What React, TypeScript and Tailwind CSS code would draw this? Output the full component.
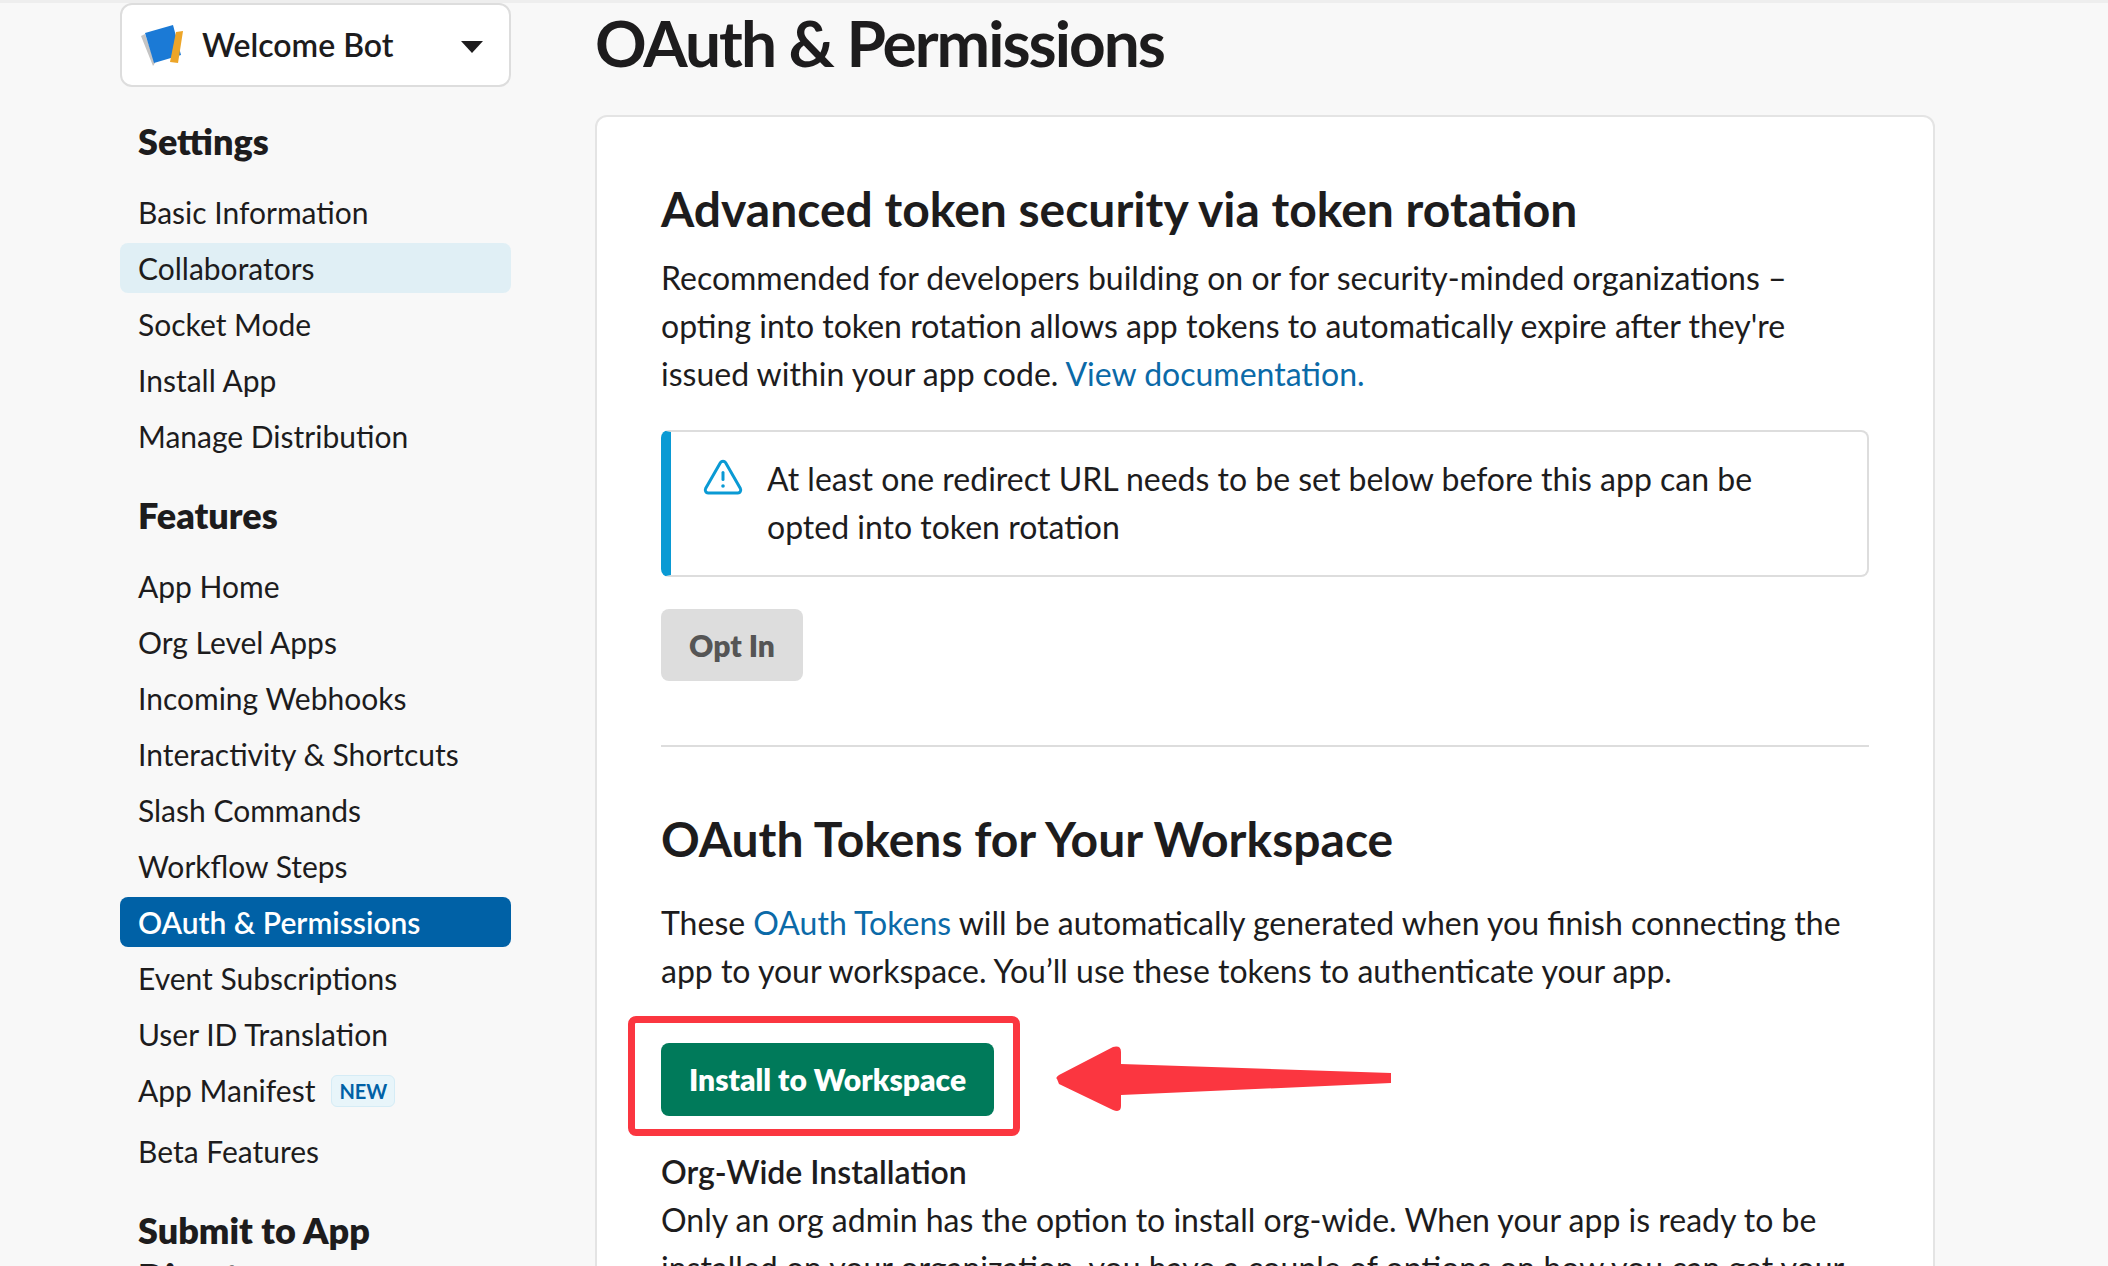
const settings = ["Basic Information", "Collaborators", "Socket Mode", "Install App", "Manage Distribution"];
const features = [
  "App Home",
  "Org Level Apps",
  "Incoming Webhooks",
  "Interactivity & Shortcuts",
  "Slash Commands",
  "Workflow Steps",
  "OAuth & Permissions",
  "Event Subscriptions",
  "User ID Translation",
];

function NavItem({ label, state }: { label: string; state?: "hover" | "active" }) {
  const tone =
    state === "active"
      ? "bg-[#0061a6] text-white font-semibold"
      : state === "hover"
        ? "bg-[#e0eff5] text-[#1d1c1d]"
        : "text-[#1d1c1d]";
  return <div className={`flex h-[50px] items-center rounded-lg px-[18px] text-[30px] ${tone}`}>{label}</div>;
}

function BookIcon() {
  return (
    <svg width="44" height="42" viewBox="0 0 44 42" className="shrink-0">
      <path d="M1 12 L5 10 L15 39 L13 42 Z" fill="#c4c4c4" />
      <path d="M5 9 L33 1 L41 31 L14 39 Z" fill="#1b7ad6" />
      <path d="M36 8 L43 7 L38 39 L30 38 Z" fill="#eda528" />
    </svg>
  );
}

function WarningIcon() {
  return (
    <svg width="40" height="36" viewBox="0 0 40 36" fill="none" className="mt-[4px] shrink-0">
      <path
        d="M17.5 3.5 a3 3 0 0 1 5 0 L37.4 29.6 a3 3 0 0 1 -2.5 4.4 H5.1 a3 3 0 0 1 -2.5 -4.4 Z"
        stroke="#0a9ad4"
        strokeWidth="3"
        strokeLinejoin="round"
      />
      <rect x="18.5" y="12" width="3" height="10" rx="1.5" fill="#0a9ad4" />
      <circle cx="20" cy="27" r="1.8" fill="#0a9ad4" />
    </svg>
  );
}

export default function App() {
  return (
    <div className="h-[1266px] w-[2108px] overflow-hidden bg-[#f8f8f8] font-['Lato',sans-serif] text-[#1d1c1d]">
      <div className="h-[3px] bg-[#eeeeee]" />
      <div className="flex pl-[120px]">
        {/* Sidebar */}
        <aside className="w-[391px] shrink-0">
          <div className="flex h-[84px] items-center rounded-xl border-2 border-[#dddddd] bg-white pl-[18px] pr-[26px]">
            <BookIcon />
            <span className="ml-[18px] flex-1 text-[32px] font-semibold">Welcome Bot</span>
            <span className="mt-[3px] h-0 w-0 border-x-[11px] border-t-[12px] border-x-transparent border-t-[#1d1c1d]" />
          </div>
          <h3 className="mt-[31px] px-[18px] text-[36px] font-extrabold leading-[46px]">Settings</h3>
          <nav className="mt-[23px] flex flex-col gap-[6px]">
            {settings.map((s) => (
              <NavItem key={s} label={s} state={s === "Collaborators" ? "hover" : undefined} />
            ))}
          </nav>
          <h3 className="mt-[31px] px-[18px] text-[36px] font-extrabold leading-[46px]">Features</h3>
          <nav className="mt-[23px] flex flex-col gap-[6px]">
            {features.map((s) => (
              <NavItem key={s} label={s} state={s === "OAuth & Permissions" ? "active" : undefined} />
            ))}
            <div className="flex h-[50px] items-center px-[18px] text-[30px]">
              App Manifest
              <span className="ml-[16px] mt-[2px] rounded-md border border-[#d5ecf6] bg-[#e8f5fa] px-[7px] text-[20px] font-bold leading-[30px] text-[#0061a6]">
                NEW
              </span>
            </div>
            <div className="mt-[5px]">
              <NavItem label="Beta Features" />
            </div>
          </nav>
          <h3 className="mt-[31px] px-[18px] text-[36px] font-extrabold leading-[46px]">Submit to App Directory</h3>
        </aside>

        {/* Main */}
        <main className="ml-[84px] w-[1340px] shrink-0">
          <h1 className="mt-[-8px] h-[120px] text-[64px] font-bold leading-[96px] tracking-[-2px]">OAuth &amp; Permissions</h1>
          <section className="relative rounded-xl border-2 border-[#e4e4e4] bg-white px-[64px] pt-[62px]">
            <h2 className="text-[48px] font-bold leading-[60px]">Advanced token security via token rotation</h2>
            <p className="mt-[15px] text-[32px] leading-[48px]">
              Recommended for developers building on or for security-minded organizations – opting into token rotation allows app tokens to automatically expire after they're issued within your app code.{" "}
              <span className="text-[#0b6aa8]">View documentation.</span>
            </p>
            <div className="mt-[32px] flex h-[147px] rounded-lg border-2 border-l-[10px] border-[#dddddd] border-l-[#0a9ad4] pl-[32px] pr-[60px] pt-[23px]">
              <WarningIcon />
              <p className="ml-[24px] text-[32px] leading-[48px]">
                At least one redirect URL needs to be set below before this app can be opted into token rotation
              </p>
            </div>
            <button className="mt-[32px] flex h-[72px] w-[142px] items-center justify-center rounded-lg bg-[#dddddd] text-[30px] font-extrabold text-[#555555]">
              Opt In
            </button>
            <hr className="mt-[64px] border-t-2 border-[#dddddd]" />
            <h2 className="mt-[62px] text-[48px] font-bold leading-[60px]">OAuth Tokens for Your Workspace</h2>
            <p className="mt-[30px] text-[32px] leading-[48px]">
              These <span className="text-[#0b6aa8]">OAuth Tokens</span> will be automatically generated when you finish connecting the app to your workspace. You’ll use these tokens to authenticate your app.
            </p>
            <button className="mt-[48px] flex h-[73px] w-[333px] items-center justify-center rounded-lg bg-[#007a5a] text-[30px] font-extrabold text-white">
              Install to Workspace
            </button>
            <p className="mt-[32px] text-[32px] font-semibold leading-[48px]">Org-Wide Installation</p>
            <p className="text-[32px] leading-[48px]">
              Only an org admin has the option to install org-wide. When your app is ready to be installed on your organization, you have a couple of options on how you can get your app approved.
            </p>

            {/* annotation */}
            <div className="absolute left-[31px] top-[899px] h-[120px] w-[392px] rounded-lg border-[7px] border-[#fb3640]" />
            <svg width="340" height="70" viewBox="0 0 340 70" className="absolute left-[458px] top-[929px]">
              <path
                d="M2 33 Q0 32 4 29 L58 1 Q66 -1 66 6 V18 L336 27 V37 L66 49 V60 Q66 67 58 64 L4 38 Z"
                fill="#fb3640"
              />
            </svg>
          </section>
        </main>
      </div>
    </div>
  );
}
